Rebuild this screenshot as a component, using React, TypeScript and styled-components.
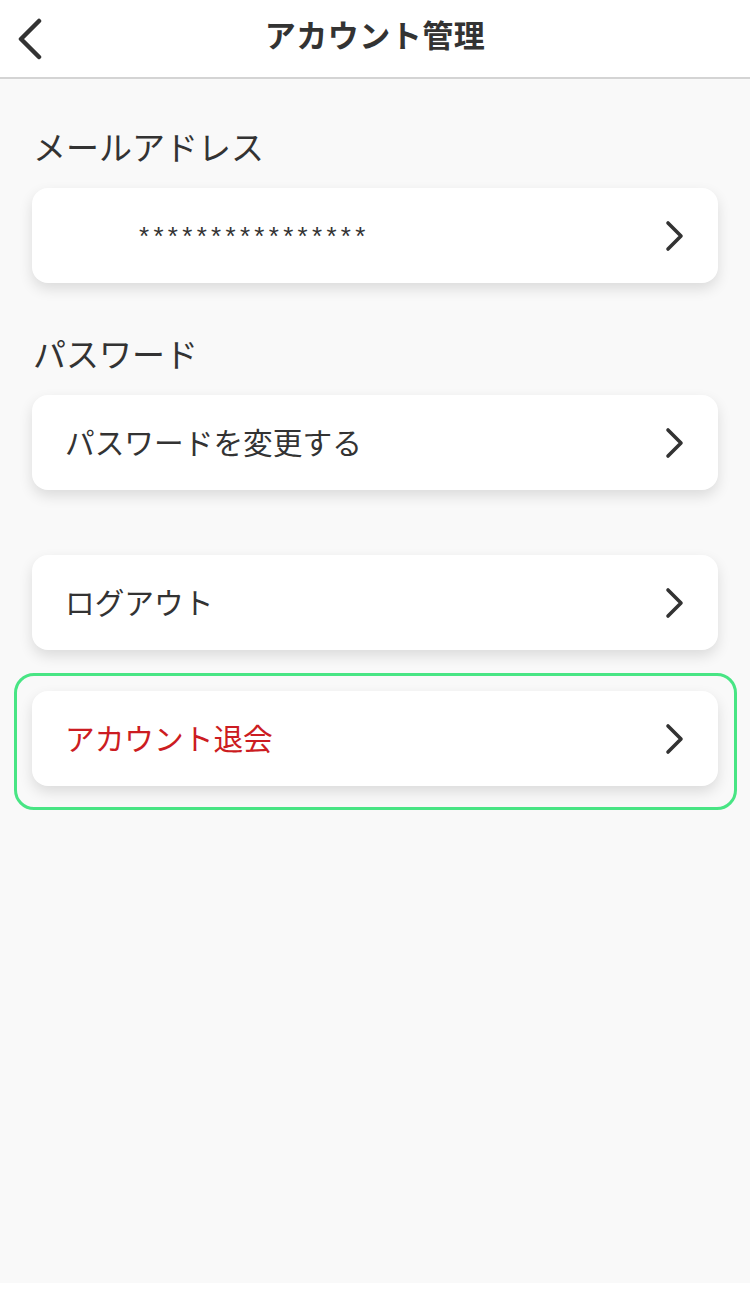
import styled, { createGlobalStyle } from "styled-components";

const GlobalStyle = createGlobalStyle`
  html, body {
    margin: 0;
    padding: 0;
    background: #fff;
  }
  body {
    font-family: "Noto Sans CJK JP", "Noto Sans", sans-serif;
    color: #333;
  }
`;

const Screen = styled.div`
  width: 750px;
  min-height: 1283px;
  background: #f9f9f9;
  display: flex;
  flex-direction: column;
`;

const Header = styled.header`
  height: 77px;
  background: #fff;
  border-bottom: 2px solid #d4d4d4;
  display: grid;
  grid-template-columns: 80px 1fr 80px;
  align-items: center;
`;

const BackButton = styled.button`
  border: none;
  background: none;
  padding: 0 0 0 16px;
  height: 70px;
  display: flex;
  align-items: center;
  cursor: pointer;
`;

const Title = styled.h1`
  margin: 0 0 10px;
  text-align: center;
  font-size: 31px;
  font-weight: 700;
  color: #333;
  letter-spacing: 0.5px;
`;

const Content = styled.main`
  padding: 45px 32px 0 32px;
  width: 686px;
  display: flex;
  flex-direction: column;
`;

const SectionLabel = styled.h2<{ $top?: number }>`
  margin: ${(p) => p.$top ?? 0}px 0 19px 1px;
  font-size: 33px;
  line-height: 45px;
  font-weight: 400;
  color: #333;
`;

const Card = styled.button<{ $top?: number }>`
  margin-top: ${(p) => p.$top ?? 0}px;
  width: 686px;
  height: 95px;
  border: none;
  border-radius: 16px;
  background: #fff;
  box-shadow: 0 6px 14px rgba(0, 0, 0, 0.12);
  display: flex;
  align-items: center;
  justify-content: space-between;
  padding: 0 32px 0 33px;
  box-sizing: border-box;
  cursor: pointer;
  font-family: inherit;
`;

const CardText = styled.span<{ $danger?: boolean }>`
  font-size: 29.7px;
  color: ${(p) => (p.$danger ? "#cc1c22" : "#333")};
  margin-bottom: 3px;
`;

const Masked = styled.span`
  font-family: "Liberation Sans", sans-serif;
  font-size: 26px;
  letter-spacing: 4.3px;
  color: #333;
  padding-left: 74px;
  margin-top: 2px;
`;

const Highlight = styled.div`
  margin: 23px -19px 0 -18px;
  border: 3px solid #48e584;
  border-radius: 20px;
  padding: 15px 16px 21px 15px;
`;

function Chevron() {
  return (
    <svg width="22" height="32" viewBox="0 0 22 32">
      <polyline
        points="4,3 17,16 4,29"
        fill="none"
        stroke="#333"
        strokeWidth="3.6"
        strokeLinecap="round"
        strokeLinejoin="round"
      />
    </svg>
  );
}

function BackIcon() {
  return (
    <svg width="30" height="42" viewBox="0 0 30 42">
      <polyline
        points="23,3 5,21 23,39"
        fill="none"
        stroke="#333"
        strokeWidth="4.5"
        strokeLinecap="round"
        strokeLinejoin="round"
      />
    </svg>
  );
}

function App() {
  return (
    <Screen>
      <GlobalStyle />
      <Header>
        <BackButton aria-label="戻る">
          <BackIcon />
        </BackButton>
        <Title>アカウント管理</Title>
        <div />
      </Header>
      <Content>
        <SectionLabel>メールアドレス</SectionLabel>
        <Card>
          <Masked>****************</Masked>
          <Chevron />
        </Card>

        <SectionLabel $top={48}>パスワード</SectionLabel>
        <Card>
          <CardText>パスワードを変更する</CardText>
          <Chevron />
        </Card>

        <Card $top={65}>
          <CardText>ログアウト</CardText>
          <Chevron />
        </Card>

        <Highlight>
          <Card>
            <CardText $danger>アカウント退会</CardText>
            <Chevron />
          </Card>
        </Highlight>
      </Content>
    </Screen>
  );
}

export default App;
